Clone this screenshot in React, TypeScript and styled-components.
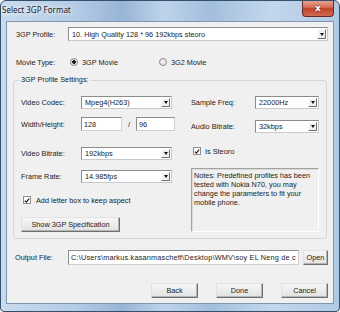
import React from 'react';
import styled, { createGlobalStyle } from 'styled-components';

const GlobalStyle = createGlobalStyle`
  html, body {
    margin: 0;
    padding: 0;
    background: #ffffff;
  }

  body {
    font-family: "Liberation Sans", Arial, sans-serif;
    font-size: 7.3px;
    color: #1b1b1b;
  }
`;

const Window = styled.div`
  width: 340px;
  height: 312px;
  box-sizing: border-box;
  display: flex;
  flex-direction: column;
  border: 1px solid #34506f;
  border-radius: 6px 6px 4px 4px;
  overflow: hidden;
  background: linear-gradient(90deg, #c9dbee 0%, #b4cbe5 22%, #98b5d6 36%, #bed3ea 48%, #a3bfdc 62%, #c3d7ec 80%, #b2c9e3 100%);
`;

const TitleBar = styled.div`
  height: 20px;
  flex-shrink: 0;
  display: flex;
  justify-content: space-between;
  align-items: flex-start;
`;

const Title = styled.div`
  font-family: "Noto Sans", "Open Sans", sans-serif;
  font-size: 8px;
  line-height: 18px;
  padding-left: 1px;
  color: #1a1a1a;
  text-shadow: 0 0 4px #ffffff, 0 0 6px #ffffff;
`;

const CloseButton = styled.div`
  width: 32px;
  height: 17px;
  margin: -1px 5px 0 0;
  box-sizing: border-box;
  border: 1px solid #6a2c22;
  border-top: none;
  border-radius: 0 0 4px 4px;
  background: linear-gradient(180deg, #e9a897 0%, #d46f59 45%, #c0412a 55%, #d36a52 100%);
  display: flex;
  align-items: center;
  justify-content: center;
  color: #ffffff;
  font-family: "DejaVu Sans", sans-serif;
  font-size: 9px;
  font-weight: bold;
  text-shadow: 0 0 2px #5a1a10;
`;

const Client = styled.div`
  flex: 1;
  margin: 0 5px 7px 5px;
  border: 1px solid #7f97b4;
  background: #f0f0f0;
  padding: 5px 5px 0 6px;
  display: flex;
  flex-direction: column;
`;

const Row = styled.div<{ $top?: number; $indent?: number; $height?: number }>`
  display: flex;
  align-items: center;
  margin-top: ${({ $top }) => $top ?? 0}px;
  padding-left: ${({ $indent }) => $indent ?? 0}px;
  height: ${({ $height }) => ($height ? `${$height}px` : 'auto')};
`;

const Label = styled.span<{ $width: number }>`
  width: ${({ $width }) => $width}px;
  flex-shrink: 0;
  white-space: nowrap;
`;

const ComboBox = styled.div<{ $width?: number; $height?: number }>`
  ${({ $width }) => ($width ? `width: ${$width}px;` : 'flex: 1;')}
  height: ${({ $height }) => $height ?? 13}px;
  box-sizing: border-box;
  display: flex;
  align-items: stretch;
  background: #ffffff;
  border: 1px solid #8c8c8c;
  border-right-color: #c9c9c9;
  border-bottom-color: #c9c9c9;
`;

const ComboText = styled.span`
  flex: 1;
  padding-left: 3px;
  display: flex;
  align-items: center;
  white-space: nowrap;
  overflow: hidden;
`;

const ArrowButton = styled.span`
  width: 9px;
  margin: 1px;
  box-sizing: border-box;
  background: #f0f0f0;
  border: 1px solid;
  border-color: #ffffff #707070 #707070 #ffffff;
  display: flex;
  align-items: center;
  justify-content: center;

  &::after {
    content: '';
    border-left: 2.5px solid transparent;
    border-right: 2.5px solid transparent;
    border-top: 3px solid #111111;
  }
`;

const TextBox = styled.div<{ $width?: number; $height?: number; $spacing?: number }>`
  ${({ $width }) => ($width ? `width: ${$width}px;` : 'flex: 1; min-width: 0;')}
  height: ${({ $height }) => $height ?? 14}px;
  box-sizing: border-box;
  background: #ffffff;
  border: 1px solid #8c8c8c;
  border-right-color: #cfcfcf;
  border-bottom-color: #cfcfcf;
  padding: 0 2px;
  display: flex;
  align-items: center;
  white-space: nowrap;
  overflow: hidden;
  letter-spacing: ${({ $spacing }) => $spacing ?? 0}px;
`;

const Slash = styled.span`
  width: 14px;
  text-align: center;
`;

const RadioItem = styled.label<{ $width: number }>`
  width: ${({ $width }) => $width}px;
  display: flex;
  align-items: center;
  gap: 4px;
`;

const RadioDot = styled.span<{ $checked?: boolean }>`
  width: 8px;
  height: 8px;
  box-sizing: border-box;
  border-radius: 50%;
  border: 1px solid #8a8a8a;
  background: radial-gradient(circle, ${({ $checked }) => ($checked ? '#202020 0 1.6px, #e8e8e8 2px' : '#f4f4f4 0, #dcdcdc 100%')});
`;

const CheckBox = styled.label<{ $gap?: number }>`
  display: flex;
  align-items: center;
  gap: ${({ $gap }) => $gap ?? 5}px;
  height: 10px;
`;

const CheckSquare = styled.span`
  width: 8px;
  height: 8px;
  box-sizing: border-box;
  border: 1px solid #8e8e8e;
  background: #ffffff;
  display: flex;
  align-items: center;
  justify-content: center;
`;

const GroupBox = styled.fieldset`
  margin: 7px 1px 0 0;
  padding: 0 7px 6px 7px;
  border: 1px solid #d0d8de;
  border-radius: 3px;
  min-width: 0;
`;

const Legend = styled.legend`
  padding: 0 1px;
  margin-left: -1px;
  line-height: 10px;
  height: 10px;
`;

const SettingsGrid = styled.div`
  display: grid;
  grid-template-columns: 170px 1fr;
`;

const Column = styled.div`
  display: flex;
  flex-direction: column;
`;

const PushButton = styled.button<{ $width?: number; $gapLeft?: number }>`
  width: ${({ $width }) => ($width ? `${$width}px` : 'auto')};
  height: 15px;
  box-sizing: border-box;
  padding: 0;
  margin-left: ${({ $gapLeft }) => $gapLeft ?? 0}px;
  font-family: inherit;
  font-size: 7.3px;
  color: #1b1b1b;
  border: 1px solid;
  border-color: #e2e2e2 #6f6f6f #6f6f6f #e2e2e2;
  border-radius: 1px;
  background: linear-gradient(180deg, #f6f6f6 0%, #ececec 50%, #e2e2e2 100%);
  box-shadow: inset -1px -1px 0 #b4b4b4;
  white-space: nowrap;
`;

const Notes = styled.div`
  height: 64px;
  box-sizing: border-box;
  border: 1px solid;
  border-color: #a2a2a2 #ffffff #ffffff #a2a2a2;
  box-shadow: inset 1px 1px 0 #dadada;
  padding: 2px 2px;
  line-height: 9px;
`;

const Footer = styled.div`
  display: flex;
  justify-content: flex-end;
  gap: 18px;
  margin-top: 18px;
`;

const Check = () => (
  <svg width="7" height="7" viewBox="0 0 7 7">
    <path d="M1 3.6 L2.8 5.4 L6 1.4" fill="none" stroke="#1c1c1c" strokeWidth="1.4" />
  </svg>
);

const Combo: React.FC<{ value: string; width?: number; height?: number }> = ({ value, width, height }) => (
  <ComboBox $width={width} $height={height}>
    <ComboText>{value}</ComboText>
    <ArrowButton />
  </ComboBox>
);

const App: React.FC = () => (
  <>
    <GlobalStyle />
    <Window>
      <TitleBar>
        <Title>Select 3GP Format</Title>
        <CloseButton>x</CloseButton>
      </TitleBar>
      <Client>
        <Row $indent={3}>
          <Label $width={52}>3GP Profile:</Label>
          <Combo value="10. High Quality 128 * 96 192kbps steoro" height={14} />
        </Row>
        <Row $indent={3} $top={15} $height={12}>
          <Label $width={54}>Movie Type:</Label>
          <RadioItem $width={89}>
            <RadioDot $checked />
            3GP Movie
          </RadioItem>
          <RadioItem $width={80}>
            <RadioDot />
            3G2 Movie
          </RadioItem>
        </Row>
        <GroupBox>
          <Legend>3GP Profile Settings:</Legend>
          <SettingsGrid>
            <Column>
              <Row $top={11}>
                <Label $width={60}>Video Codec:</Label>
                <Combo value="Mpeg4(H263)" width={91} />
              </Row>
              <Row $top={8}>
                <Label $width={60}>Width/Height:</Label>
                <TextBox $width={41}>128</TextBox>
                <Slash>/</Slash>
                <TextBox $width={39}>96</TextBox>
              </Row>
              <Row $top={16}>
                <Label $width={60}>Video Bitrate:</Label>
                <Combo value="192kbps" width={91} />
              </Row>
              <Row $top={10}>
                <Label $width={60}>Frame Rate:</Label>
                <Combo value="14.985fps" width={91} />
              </Row>
              <Row $top={12} $indent={2}>
                <CheckBox>
                  <CheckSquare>
                    <Check />
                  </CheckSquare>
                  Add letter box to keep aspect
                </CheckBox>
              </Row>
              <Row $top={12}>
                <PushButton $width={99}>Show 3GP Specification</PushButton>
              </Row>
            </Column>
            <Column>
              <Row $top={11}>
                <Label $width={64}>Sample Freq:</Label>
                <Combo value="22000Hz" width={64} />
              </Row>
              <Row $top={11}>
                <Label $width={64}>Audio Bitrate:</Label>
                <Combo value="32kbps" width={64} />
              </Row>
              <Row $top={13} $indent={2}>
                <CheckBox $gap={4}>
                  <CheckSquare>
                    <Check />
                  </CheckSquare>
                  Is Steoro
                </CheckBox>
              </Row>
              <Row $top={12} />
              <Notes>
                Notes: Predefined profiles has been tested with Nokia N70, you may change the parameters to fit your
                mobile phone.
              </Notes>
            </Column>
          </SettingsGrid>
        </GroupBox>
        <Row $indent={2} $top={11}>
          <Label $width={53}>Output File:</Label>
          <TextBox $height={15} $spacing={0.2}>C:\Users\markus.kasanmascheff\Desktop\WMV\soy EL Neng de c</TextBox>
          <PushButton $width={25} $gapLeft={4}>
            Open
          </PushButton>
        </Row>
        <Footer>
          <PushButton $width={47}>Back</PushButton>
          <PushButton $width={47}>Done</PushButton>
          <PushButton $width={47}>Cancel</PushButton>
        </Footer>
      </Client>
    </Window>
  </>
);

export default App;
